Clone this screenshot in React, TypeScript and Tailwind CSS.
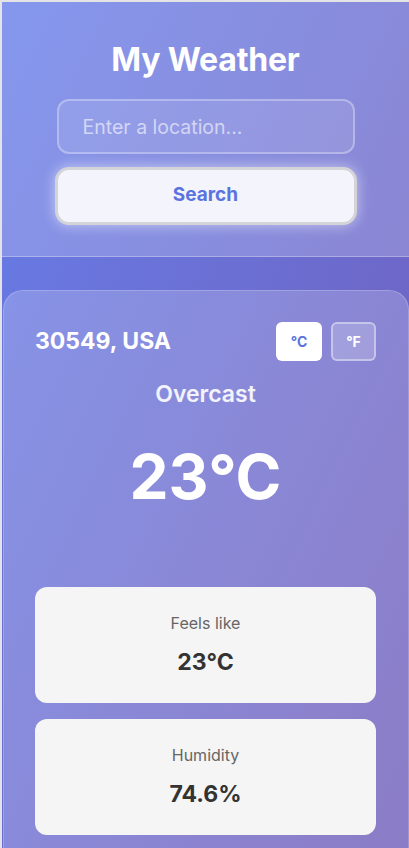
import React, { useState } from 'react';

const details = [
  { label: 'Feels like', value: '23°C' },
  { label: 'Humidity', value: '74.6%' },
];

function App() {
  const [unit, setUnit] = useState<'C' | 'F'>('C');

  return (
    <div className="min-h-screen bg-[#e4e4e7] pt-[2px] pl-[2px] font-['Inter',sans-serif]">
      <div className="min-h-[846px] bg-gradient-to-br from-[#667eea] to-[#6f5cb8] overflow-hidden">
        {/* Header */}
        <header className="bg-white/20 border-b border-white/30 pt-[39px] pb-[31px] flex flex-col items-center">
          <h1 className="text-[32px] leading-[37px] font-bold text-white tracking-[-0.2px]">My Weather</h1>
          <input
            type="text"
            placeholder="Enter a location..."
            className="mt-[21px] w-[298px] h-[55px] rounded-[12px] bg-white/10 border-2 border-white/30 px-[24px] text-[19.5px] text-white placeholder:text-white/60 outline-none"
          />
          <button className="mt-[13px] w-[302px] h-[58px] rounded-[14px] border-[3px] border-[#d4d4d8] bg-[#f3f4fc] pb-[2px] text-[19px] font-bold text-[#5b73e0] shadow-[0_0_14px_rgba(255,255,255,0.55)]">
            Search
          </button>
        </header>

        {/* Weather card */}
        <main className="pt-[33px] pl-[1px]">
          <section className="w-[406px] rounded-t-[20px] border border-white/20 bg-white/20 pl-[31px] pr-[32px] pt-[31px] pb-[14px]">
            <div className="flex items-center justify-between">
              <h2 className="text-[23px] font-bold text-white">30549, USA</h2>
              <div className="flex gap-[9px]">
                <button
                  onClick={() => setUnit('C')}
                  className={
                    unit === 'C'
                      ? 'w-[46px] h-[39px] rounded-[6px] bg-white text-[#5b73e0] text-[14px] font-bold'
                      : 'w-[46px] h-[39px] rounded-[6px] border-2 border-white/40 bg-white/20 text-white text-[14px] font-bold'
                  }
                >
                  °C
                </button>
                <button
                  onClick={() => setUnit('F')}
                  className={
                    unit === 'F'
                      ? 'w-[45px] h-[39px] rounded-[6px] bg-white text-[#5b73e0] text-[14px] font-bold'
                      : 'w-[45px] h-[39px] rounded-[6px] border-2 border-white/40 bg-white/20 text-white text-[14px] font-bold'
                  }
                >
                  °F
                </button>
              </div>
            </div>

            <p className="mt-[18px] text-center text-[23px] leading-[31px] font-semibold text-white/90">Overcast</p>
            <p className="mt-[27px] text-center text-[62px] leading-[80px] font-bold text-white">23°C</p>

            <div className="mt-[70px] flex flex-col gap-[16px]">
              {details.map((d) => (
                <div key={d.label} className="h-[116px] rounded-[12px] bg-[#f5f5f5] flex flex-col items-center pt-[24px]">
                  <span className="text-[16px] text-[#666]">{d.label}</span>
                  <span className="mt-[10px] text-[23px] font-bold text-[#333]">{d.value}</span>
                </div>
              ))}
            </div>
          </section>
        </main>
      </div>
    </div>
  );
}

export default App;
